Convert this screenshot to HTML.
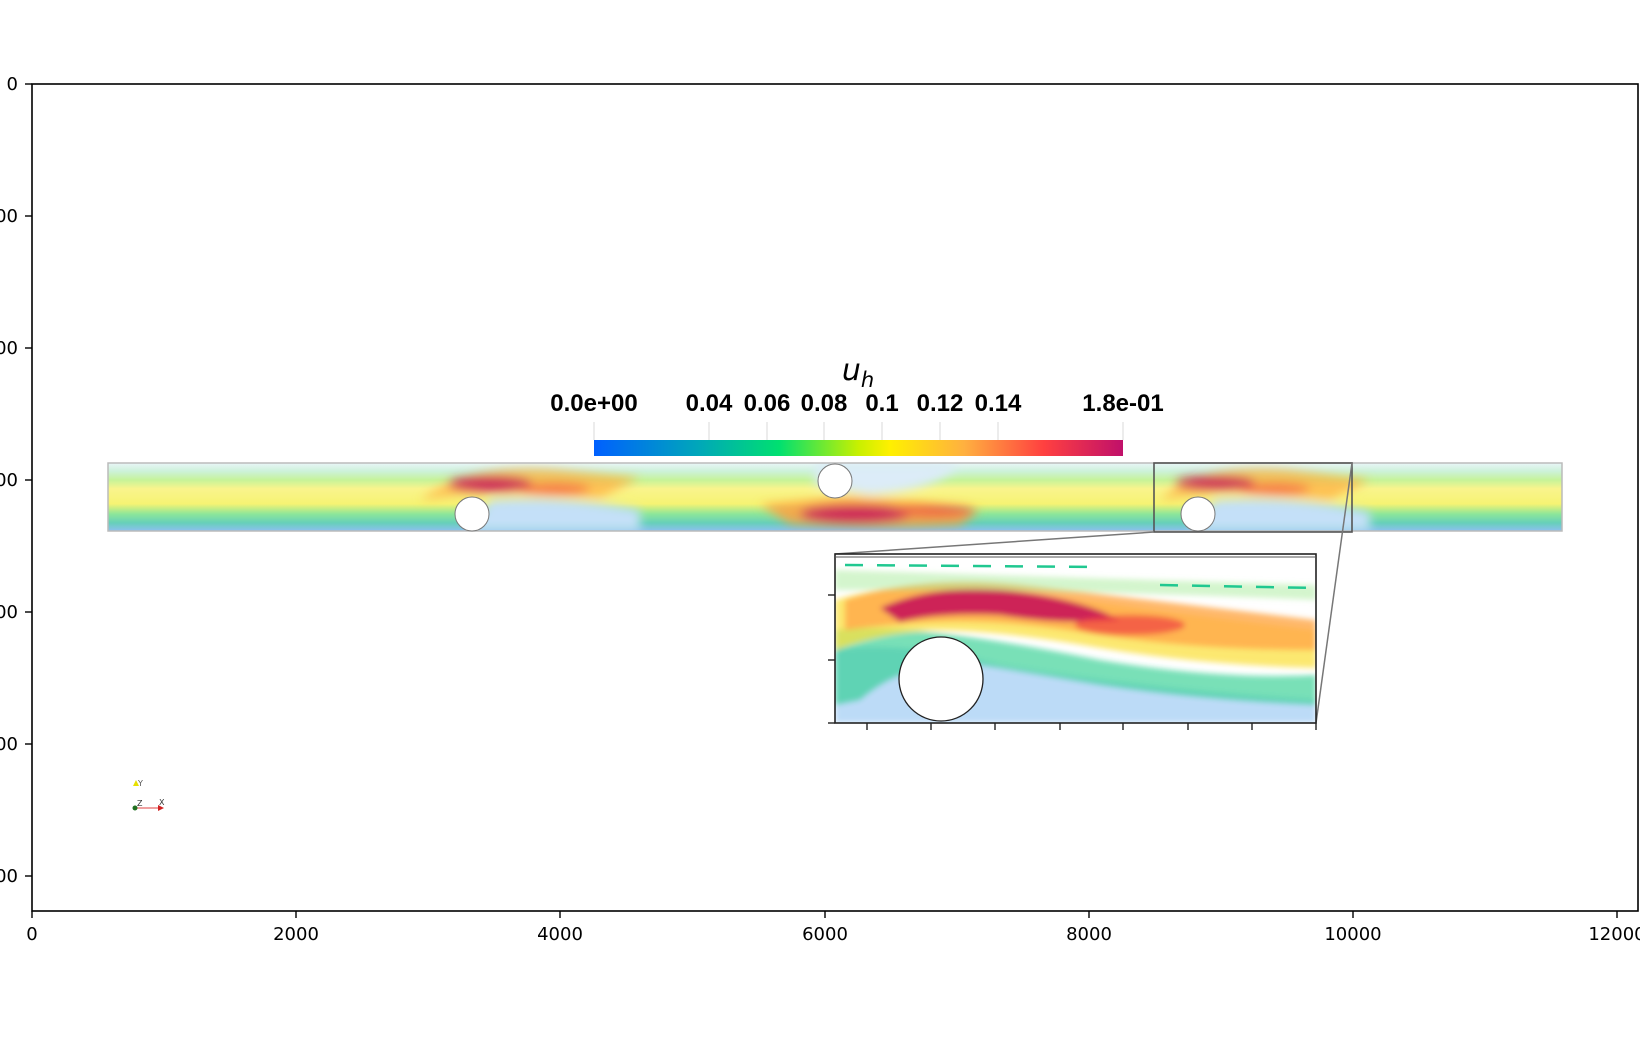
<!DOCTYPE html>
<html><head><meta charset="utf-8"><style>
html,body{margin:0;padding:0;background:#fff;width:1640px;height:1041px;overflow:hidden}
svg{display:block}
.t{font-family:"DejaVu Sans","Liberation Sans",sans-serif;font-size:18px;fill:#000}
.cb{font-family:"Liberation Sans","DejaVu Sans",sans-serif;font-size:24px;font-weight:bold;fill:#000}
</style></head><body>
<svg width="1640" height="1041" viewBox="0 0 1640 1041" xmlns="http://www.w3.org/2000/svg">
<defs>
<linearGradient id="cbar" x1="0" x2="1" y1="0" y2="0">
<stop offset="0" stop-color="#0060ff"/><stop offset="0.2" stop-color="#00a8b8"/><stop offset="0.35" stop-color="#00e070"/><stop offset="0.5" stop-color="#c8f000"/><stop offset="0.56" stop-color="#fff000"/><stop offset="0.7" stop-color="#ffb040"/><stop offset="0.85" stop-color="#ff4040"/><stop offset="1" stop-color="#c0106a"/>
</linearGradient>
<linearGradient id="chan" x1="0" x2="0" y1="0" y2="1">
<stop offset="0" stop-color="#e4f4f6"/><stop offset="0.12" stop-color="#c0eed0"/><stop offset="0.25" stop-color="#b8f080"/><stop offset="0.38" stop-color="#f8f270"/><stop offset="0.6" stop-color="#f4f050"/><stop offset="0.75" stop-color="#70e080"/><stop offset="0.88" stop-color="#40c4a8"/><stop offset="1" stop-color="#70b0ec"/>
</linearGradient>
<filter id="b3" x="-20%" y="-50%" width="140%" height="200%"><feGaussianBlur stdDeviation="3"/></filter>
<filter id="b5" x="-20%" y="-50%" width="140%" height="200%"><feGaussianBlur stdDeviation="5"/></filter>
<clipPath id="cc"><rect x="108" y="463" width="1454" height="68"/></clipPath>
<clipPath id="ic"><rect x="835" y="554" width="481" height="169"/></clipPath>
</defs>

<rect x="32" y="84" width="1606" height="827" fill="none" stroke="#000" stroke-width="1.6"/>
<g stroke="#000" stroke-width="1.4">
<line x1="25" y1="84" x2="32" y2="84"/><line x1="25" y1="216" x2="32" y2="216"/><line x1="25" y1="348" x2="32" y2="348"/><line x1="25" y1="480" x2="32" y2="480"/><line x1="25" y1="612" x2="32" y2="612"/><line x1="25" y1="744" x2="32" y2="744"/><line x1="25" y1="876" x2="32" y2="876"/>
<line x1="32" y1="911" x2="32" y2="918"/><line x1="296" y1="911" x2="296" y2="918"/><line x1="560" y1="911" x2="560" y2="918"/><line x1="825" y1="911" x2="825" y2="918"/><line x1="1089" y1="911" x2="1089" y2="918"/><line x1="1353" y1="911" x2="1353" y2="918"/><line x1="1617" y1="911" x2="1617" y2="918"/>
</g>
<g class="t" text-anchor="end">
<text x="18" y="90">0</text><text x="18" y="222">200</text><text x="18" y="354">400</text><text x="18" y="486">600</text><text x="18" y="618">800</text><text x="18" y="750">1000</text><text x="18" y="882">1200</text>
</g>
<g class="t" text-anchor="middle">
<text x="32" y="940">0</text><text x="296" y="940">2000</text><text x="560" y="940">4000</text><text x="825" y="940">6000</text><text x="1089" y="940">8000</text><text x="1353" y="940">10000</text><text x="1617" y="940">12000</text>
</g>

<text x="858" y="380" text-anchor="middle" font-family="DejaVu Sans,sans-serif" font-style="italic" font-size="30">u<tspan font-size="21" dy="7">h</tspan></text>
<g class="cb" text-anchor="middle">
<text x="594" y="411">0.0e+00</text><text x="709" y="411">0.04</text><text x="767" y="411">0.06</text><text x="824" y="411">0.08</text><text x="882" y="411">0.1</text><text x="940" y="411">0.12</text><text x="998" y="411">0.14</text><text x="1123" y="411">1.8e-01</text>
</g>
<g stroke="#d8d8d8" stroke-width="1">
<line x1="594" y1="422" x2="594" y2="440"/><line x1="709" y1="422" x2="709" y2="440"/><line x1="767" y1="422" x2="767" y2="440"/><line x1="824" y1="422" x2="824" y2="440"/><line x1="882" y1="422" x2="882" y2="440"/><line x1="940" y1="422" x2="940" y2="440"/><line x1="998" y1="422" x2="998" y2="440"/><line x1="1123" y1="422" x2="1123" y2="440"/>
</g>
<rect x="594" y="440" width="529" height="16" fill="url(#cbar)"/>

<g clip-path="url(#cc)">
<rect x="108" y="463" width="1454" height="68" fill="url(#chan)" opacity="0.8"/>
<g filter="url(#b5)">
<path d="M420 500 Q470 462 560 470 L640 478 L600 498 Q520 495 490 492 Z" fill="#ffb040" opacity="0.75"/>
<ellipse cx="490" cy="484" rx="42" ry="8" fill="#c8105a" opacity="0.85"/>
<ellipse cx="555" cy="489" rx="35" ry="6" fill="#f04040" opacity="0.55"/>
<path d="M490 500 Q560 495 640 510 L640 531 L470 531 Z" fill="#c4e0f8"/>
<path d="M760 505 Q810 500 850 497 Q920 500 980 510 L960 525 Q880 530 790 524 Z" fill="#ffa040" opacity="0.85"/>
<ellipse cx="855" cy="514" rx="55" ry="9" fill="#c8105a" opacity="0.85"/>
<ellipse cx="935" cy="511" rx="40" ry="6" fill="#f04040" opacity="0.6"/>
<path d="M815 463 L960 463 Q940 490 870 495 L815 485 Z" fill="#dcecf8"/>
<path d="M1160 500 Q1200 462 1290 470 L1370 480 L1330 500 Q1250 494 1220 492 Z" fill="#ffb040" opacity="0.75"/>
<ellipse cx="1215" cy="483" rx="40" ry="7" fill="#c8105a" opacity="0.85"/>
<ellipse cx="1275" cy="489" rx="35" ry="6" fill="#f04040" opacity="0.55"/>
<path d="M1215 500 Q1290 495 1370 512 L1370 531 L1190 531 Z" fill="#c4e0f8"/>
</g>
</g>
<rect x="108" y="463" width="1454" height="68" fill="none" stroke="#bbb" stroke-width="1.5"/>
<circle cx="472" cy="514" r="17" fill="#fff" stroke="#777" stroke-width="1"/>
<circle cx="835" cy="481" r="17" fill="#fff" stroke="#777" stroke-width="1"/>
<circle cx="1198" cy="514" r="17" fill="#fff" stroke="#777" stroke-width="1"/>

<rect x="1154" y="463" width="198" height="69" fill="none" stroke="#555" stroke-width="1.6"/>
<line x1="1154" y1="532" x2="835" y2="554" stroke="#777" stroke-width="1.5"/>
<line x1="1352" y1="463" x2="1316" y2="723" stroke="#777" stroke-width="1.5"/>

<rect x="835" y="554" width="481" height="169" fill="#fff"/>
<g clip-path="url(#ic)">
<g filter="url(#b3)">
<path d="M835 650 Q900 640 1000 665 Q1150 690 1316 700 L1316 723 L835 723 Z" fill="#7ab8f0" opacity="0.5"/>
<path d="M835 630 Q880 625 930 632 Q1000 640 1100 660 Q1220 680 1316 675 L1316 705 Q1200 700 1100 685 Q1000 668 960 662 Q900 665 860 700 L835 705 Z" fill="#30d090" opacity="0.65"/>
<path d="M835 600 Q900 580 1000 590 Q1150 610 1316 630 L1316 668 Q1200 665 1100 648 Q1000 630 930 630 Q880 632 835 650 Z" fill="#fbe040" opacity="0.75"/>
<path d="M845 600 Q920 575 1020 585 Q1150 600 1316 620 L1316 650 Q1200 650 1100 635 Q1000 618 930 622 Q880 625 845 630 Z" fill="#ffa848" opacity="0.8"/>
<path d="M880 608 Q930 585 1000 590 Q1080 598 1120 620 Q1060 625 1000 615 Q940 612 900 622 Z" fill="#c8105a" opacity="0.9"/>
<ellipse cx="1130" cy="625" rx="55" ry="10" fill="#f04040" opacity="0.7"/>
<path d="M835 570 L1316 585 L1316 600 Q1100 590 835 590 Z" fill="#a0e890" opacity="0.45"/>
</g>
<g stroke="#20c890" stroke-width="2.5" stroke-dasharray="18 14">
<line x1="845" y1="565" x2="1100" y2="567"/><line x1="1160" y1="585" x2="1316" y2="588"/>
</g>
</g>
<circle cx="941" cy="679" r="42" fill="#fff" stroke="#222" stroke-width="1.3"/>
<rect x="835" y="554" width="481" height="169" fill="none" stroke="#222" stroke-width="1.6"/>
<line x1="835" y1="557" x2="1316" y2="557" stroke="#555" stroke-width="1"/>
<g stroke="#222" stroke-width="1.4">
<line x1="828" y1="595" x2="835" y2="595"/><line x1="828" y1="660" x2="835" y2="660"/><line x1="828" y1="723" x2="835" y2="723"/>
<line x1="867" y1="723" x2="867" y2="730"/><line x1="931" y1="723" x2="931" y2="730"/><line x1="995" y1="723" x2="995" y2="730"/><line x1="1060" y1="723" x2="1060" y2="730"/><line x1="1123" y1="723" x2="1123" y2="730"/><line x1="1188" y1="723" x2="1188" y2="730"/><line x1="1252" y1="723" x2="1252" y2="730"/><line x1="1316" y1="723" x2="1316" y2="730"/>
</g>

<polygon points="133,786 136,780 139,786" fill="#e8e000"/>
<text x="138" y="786" font-family="DejaVu Sans,sans-serif" font-size="8" fill="#555">Y</text>
<line x1="136" y1="808" x2="160" y2="808" stroke="#e04040" stroke-width="1"/>
<polygon points="158,805 164,808 158,811" fill="#d02020"/>
<circle cx="135" cy="808" r="2.5" fill="#207020"/>
<text x="137" y="806" font-family="DejaVu Sans,sans-serif" font-size="8" fill="#333">Z</text>
<text x="159" y="805" font-family="DejaVu Sans,sans-serif" font-size="8" fill="#333">X</text>
</svg>
</body></html>
